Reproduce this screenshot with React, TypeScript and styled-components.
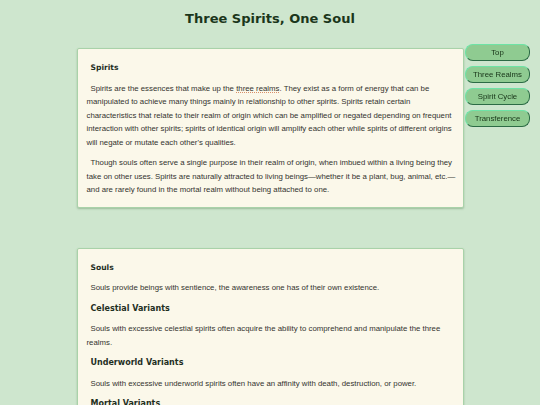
import React from 'react'
import styled, { createGlobalStyle } from 'styled-components'

const GlobalStyle = createGlobalStyle`
  html, body {
    margin: 0;
    padding: 0;
    background: #cee6ce;
  }
  body {
    font-family: 'Liberation Sans', Arial, sans-serif;
    color: #333;
  }
`

const Page = styled.div`
  display: flex;
  flex-direction: column;
  align-items: center;
  padding: 10px 0 40px;
`

const Title = styled.h1`
  margin: 0 0 20px;
  font-family: 'DejaVu Sans', Verdana, sans-serif;
  font-size: 13px;
  line-height: 18px;
  font-weight: bold;
  color: #1b361b;
`

const Card = styled.section`
  width: 369px;
  padding: 12px 7px 10px 9px;
  background: #fbf8ea;
  border: 1px solid #a9d2a9;
  border-radius: 2px;
  box-shadow: 0 1px 2px rgba(60, 110, 60, 0.35);
  margin-bottom: 40px;
`

const Heading = styled.h2<{ $large?: boolean }>`
  margin: 0 0 7px;
  padding-left: 4px;
  font-family: 'DejaVu Sans', Verdana, sans-serif;
  font-size: ${p => (p.$large ? '8px' : '7.6px')};
  line-height: 13.5px;
  font-weight: bold;
  color: #1f2f1f;
`

const Para = styled.p`
  margin: 0 0 7px;
  text-indent: 4px;
  font-size: 7.8px;
  line-height: 13.5px;
  color: #33332f;
  &:last-child {
    margin-bottom: 0;
  }
`

const Term = styled.abbr`
  text-decoration: underline dotted #d9906a;
  text-underline-offset: 1px;
`

const Nav = styled.nav`
  position: fixed;
  top: 44px;
  right: 10px;
  display: flex;
  flex-direction: column;
  gap: 5px;
`

const NavButton = styled.a`
  display: flex;
  align-items: center;
  justify-content: center;
  width: 63px;
  height: 15px;
  background: #8fcb91;
  border: 1px solid;
  border-color: #6ee3a6 #2c6b45 #2c6b45 #6ee3a6;
  border-radius: 8px 7px 8px 8px;
  font-size: 7.8px;
  color: #173417;
  text-decoration: none;
  cursor: pointer;
`

const navItems = ['Top', 'Three Realms', 'Spirit Cycle', 'Transference']

export default function App() {
  return (
    <>
      <GlobalStyle />
      <Page>
        <Title>Three Spirits, One Soul</Title>
        <Card>
          <Heading>Spirits</Heading>
          <Para>
            Spirits are the essences that make up the <Term title="Celestial, Underworld, Mortal">three realms</Term>. They
            exist as a form of energy that can be manipulated to achieve many things mainly in relationship to other
            spirits. Spirits retain certain characteristics that relate to their realm of origin which can be amplified
            or negated depending on frequent interaction with other spirits; spirits of identical origin will amplify
            each other while spirits of different origins will negate or mutate each other's qualities.
          </Para>
          <Para>
            Though souls often serve a single purpose in their realm of origin, when imbued within a living being they
            take on other uses. Spirits are naturally attracted to living beings—whether it be a plant, bug, animal,
            etc.—and are rarely found in the mortal realm without being attached to one.
          </Para>
        </Card>
        <Card>
          <Heading>Souls</Heading>
          <Para>Souls provide beings with sentience, the awareness one has of their own existence.</Para>
          <Heading $large>Celestial Variants</Heading>
          <Para>
            Souls with excessive celestial spirits often acquire the ability to comprehend and manipulate the three
            realms.
          </Para>
          <Heading $large>Underworld Variants</Heading>
          <Para>Souls with excessive underworld spirits often have an affinity with death, destruction, or power.</Para>
          <Heading $large>Mortal Variants</Heading>
          <Para>
            Souls with excessive mortal spirits often have a strong connection with the living world and its beings.
          </Para>
        </Card>
      </Page>
      <Nav>
        {navItems.map(item => (
          <NavButton key={item}>{item}</NavButton>
        ))}
      </Nav>
    </>
  )
}
